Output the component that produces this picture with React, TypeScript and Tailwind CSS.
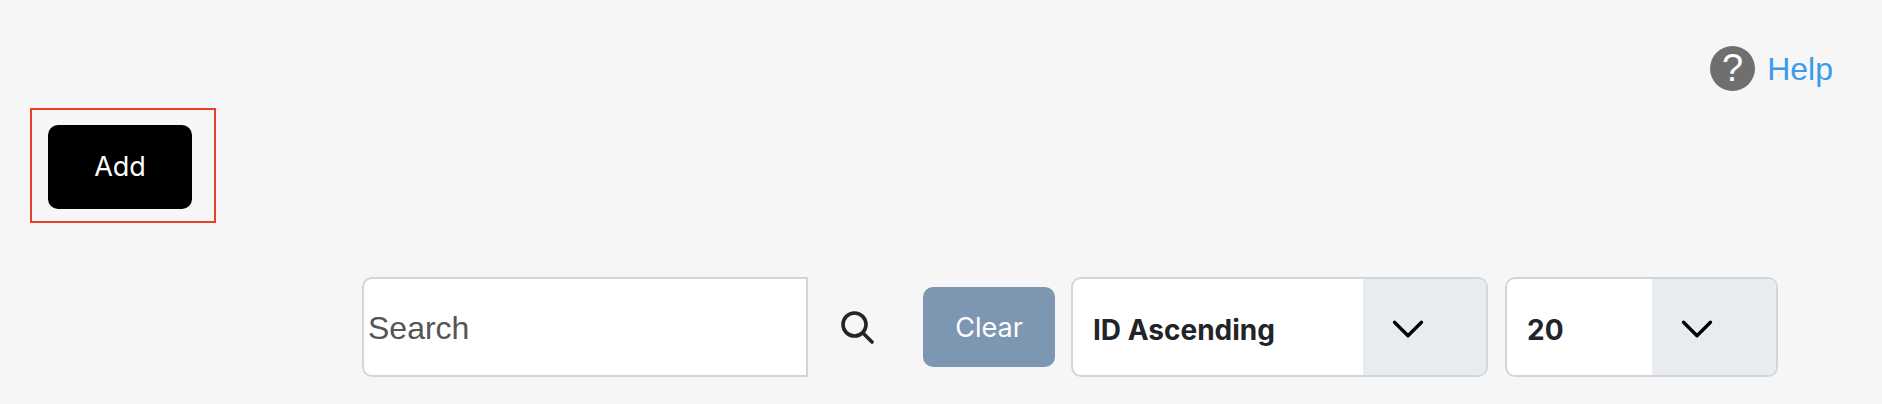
import { ChevronDown } from 'lucide-react';

function SortSelect({ label, width, labelWidth }: { label: string; width: string; labelWidth: string }) {
  return (
    <div className={`flex h-[100px] ${width} overflow-hidden rounded-[10px] border-2 border-[#d1d6dd] bg-white`}>
      <div className={`flex ${labelWidth} items-center pl-[20px] pt-[5px] text-[28px] font-bold text-[#212529]`}>
        {label}
      </div>
      <div className="flex flex-1 items-center justify-start bg-[#e9ecef] pt-[4px] pl-[18px]">
        <ChevronDown className="h-[54px] w-[54px] text-black" strokeWidth={1.5} />
      </div>
    </div>
  );
}

export default function App() {
  return (
    <div className="flex h-[404px] flex-col bg-[#f6f6f6] font-['Inter',sans-serif]">
      {/* Help link */}
      <div className="flex h-[91px] justify-end pt-[46px] pr-[49px]">
        <a href="#" className="flex h-[45px] items-center gap-[12px] font-['Liberation_Sans',sans-serif] text-[32px] text-[#3c9be9]">
          <span className="flex h-[45px] w-[45px] items-center justify-center rounded-full bg-[#6f6f6f] text-[38px] text-white">
            ?
          </span>
          Help
        </a>
      </div>

      {/* Add */}
      <div className="mt-[17px] ml-[30px] flex h-[115px] w-[186px] items-center border-2 border-[#e8412a] pt-[2px] pl-[16px]">
        <button className="h-[84px] w-[144px] rounded-[10px] bg-black pt-[1px] text-[27px] text-white">
          Add
        </button>
      </div>

      {/* Toolbar */}
      <div className="mt-[54px] ml-[362px] flex items-center">
        <input
          placeholder="Search"
          className="h-[100px] w-[446px] rounded-l-[10px] border-2 border-[#d1d6dd] bg-white pt-[2px] pl-[4px] font-['Liberation_Sans',sans-serif] text-[32px] outline-none placeholder:text-[#555]"
        />
        <button className="flex w-[115px] justify-start pl-[33px]">
          <svg width="33" height="33" viewBox="0 0 33 33" fill="none" stroke="#212529" strokeWidth="3.6" strokeLinecap="round">
            <circle cx="13.5" cy="13.5" r="11.5" />
            <path d="M22 22 L31 31" />
          </svg>
        </button>
        <button className="h-[80px] w-[132px] rounded-[10px] bg-[#7d97b3] pt-[2px] text-[27px] text-white">
          Clear
        </button>
        <div className="ml-[16px]">
          <SortSelect label="ID Ascending" width="w-[417px]" labelWidth="w-[290px]" />
        </div>
        <div className="ml-[17px]">
          <SortSelect label="20" width="w-[273px]" labelWidth="w-[145px]" />
        </div>
      </div>
    </div>
  );
}
